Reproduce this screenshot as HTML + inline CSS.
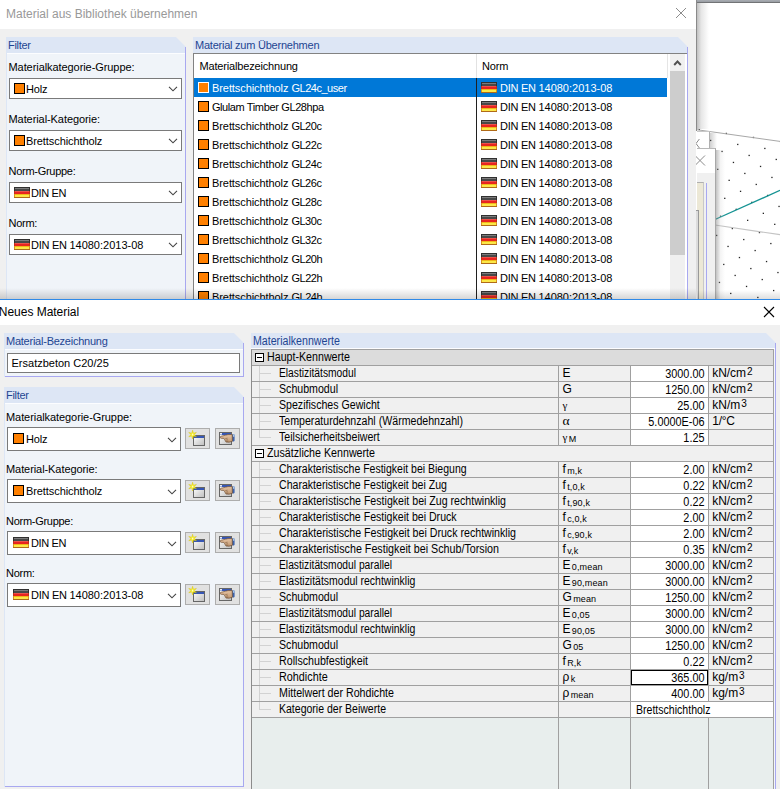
<!DOCTYPE html>
<html lang="de"><head><meta charset="utf-8"><title>Neues Material</title><style>
*{box-sizing:border-box;margin:0;padding:0}
html,body{width:780px;height:789px;overflow:hidden;background:#fff}
body{position:relative;font-family:"Liberation Sans",sans-serif;font-size:11px;color:#000}
.a{position:absolute}
.t{position:absolute;white-space:nowrap;line-height:13px;height:13px}
.tt{position:absolute;white-space:nowrap;font-size:12px;line-height:15px}
.gh{position:absolute;background:#dde6f5}
.gb{position:absolute;background:#f0f4f9}
.hd{color:#1e4592}
.cb{position:absolute;background:#fff;border:1px solid #7a7a7a}
.sw{position:absolute;width:11px;height:11px;background:#ff8000;border:1px solid #000}
.btn{position:absolute;width:25px;height:21px;background:#e1e1e1;border:1px solid #adadad}
.g{font-size:12px;line-height:16px;height:16px}
.v{width:73.5px;text-align:right}
.sym{font-size:12px;line-height:16px;height:16px}
.gr{font-family:"Liberation Serif",serif;font-size:11px}
.gr2{font-family:"Liberation Serif",serif;font-size:13.5px}
.u{font-size:12px;line-height:16px;height:16px}
.sub{font-size:9px;position:relative;top:1px;margin-left:1.3px;letter-spacing:.15px}
.sup{font-size:10px;position:relative;top:-2.5px;margin-left:1px}
</style></head><body>
<div class="a" style="left:696px;top:0px;width:84px;height:300px;background:#fff"></div>
<svg class="a" style="left:696px;top:0" width="84" height="300" viewBox="696 0 84 300"><defs><linearGradient id="sh" x1="0" x2="1" y1="0" y2="0"><stop offset="0" stop-color="#b4b4b4"/><stop offset="0.35" stop-color="#e4e4e4"/><stop offset="1" stop-color="#ffffff"/></linearGradient></defs><rect x="697.1" y="193.6" width="1.3" height="1.3" fill="#222"/><rect x="708.5" y="204.6" width="1.3" height="1.3" fill="#222"/><rect x="719.9" y="215.6" width="1.3" height="1.3" fill="#222"/><rect x="701.4" y="175.7" width="1.3" height="1.3" fill="#222"/><rect x="712.8" y="186.7" width="1.3" height="1.3" fill="#222"/><rect x="724.1" y="197.7" width="1.3" height="1.3" fill="#222"/><rect x="735.6" y="208.7" width="1.3" height="1.3" fill="#222"/><rect x="747.0" y="219.7" width="1.3" height="1.3" fill="#222"/><rect x="705.7" y="157.7" width="1.3" height="1.3" fill="#222"/><rect x="717.1" y="168.7" width="1.3" height="1.3" fill="#222"/><rect x="728.5" y="179.7" width="1.3" height="1.3" fill="#222"/><rect x="739.9" y="190.7" width="1.3" height="1.3" fill="#222"/><rect x="751.2" y="201.7" width="1.3" height="1.3" fill="#222"/><rect x="762.7" y="212.7" width="1.3" height="1.3" fill="#222"/><rect x="774.1" y="223.7" width="1.3" height="1.3" fill="#222"/><rect x="698.6" y="128.8" width="1.3" height="1.3" fill="#222"/><rect x="710.0" y="139.8" width="1.3" height="1.3" fill="#222"/><rect x="721.4" y="150.8" width="1.3" height="1.3" fill="#222"/><rect x="732.8" y="161.8" width="1.3" height="1.3" fill="#222"/><rect x="744.2" y="172.8" width="1.3" height="1.3" fill="#222"/><rect x="755.6" y="183.8" width="1.3" height="1.3" fill="#222"/><rect x="767.0" y="194.8" width="1.3" height="1.3" fill="#222"/><rect x="778.4" y="205.8" width="1.3" height="1.3" fill="#222"/><rect x="725.7" y="132.8" width="1.3" height="1.3" fill="#222"/><rect x="737.1" y="143.8" width="1.3" height="1.3" fill="#222"/><rect x="748.5" y="154.8" width="1.3" height="1.3" fill="#222"/><rect x="759.9" y="165.8" width="1.3" height="1.3" fill="#222"/><rect x="771.3" y="176.8" width="1.3" height="1.3" fill="#222"/><rect x="752.8" y="136.8" width="1.3" height="1.3" fill="#222"/><rect x="764.2" y="147.8" width="1.3" height="1.3" fill="#222"/><rect x="775.6" y="158.8" width="1.3" height="1.3" fill="#222"/><rect x="779.9" y="140.9" width="1.3" height="1.3" fill="#222"/><rect x="718.8" y="281.8" width="1.3" height="1.3" fill="#222"/><rect x="730.1" y="292.8" width="1.3" height="1.3" fill="#222"/><rect x="723.1" y="263.8" width="1.3" height="1.3" fill="#222"/><rect x="734.5" y="274.8" width="1.3" height="1.3" fill="#222"/><rect x="745.9" y="285.8" width="1.3" height="1.3" fill="#222"/><rect x="757.2" y="296.8" width="1.3" height="1.3" fill="#222"/><rect x="716.0" y="234.8" width="1.3" height="1.3" fill="#222"/><rect x="727.4" y="245.8" width="1.3" height="1.3" fill="#222"/><rect x="738.8" y="256.9" width="1.3" height="1.3" fill="#222"/><rect x="750.2" y="267.9" width="1.3" height="1.3" fill="#222"/><rect x="761.6" y="278.9" width="1.3" height="1.3" fill="#222"/><rect x="773.0" y="289.9" width="1.3" height="1.3" fill="#222"/><rect x="731.7" y="227.9" width="1.3" height="1.3" fill="#222"/><rect x="743.1" y="238.9" width="1.3" height="1.3" fill="#222"/><rect x="754.5" y="249.9" width="1.3" height="1.3" fill="#222"/><rect x="765.9" y="260.9" width="1.3" height="1.3" fill="#222"/><rect x="777.3" y="271.9" width="1.3" height="1.3" fill="#222"/><rect x="758.8" y="231.9" width="1.3" height="1.3" fill="#222"/><rect x="770.2" y="242.9" width="1.3" height="1.3" fill="#222"/><line x1="696" y1="129.6" x2="780" y2="141.4" stroke="#a8a8a8" stroke-width="1"/><line x1="715" y1="225" x2="780" y2="234.7" stroke="#c4c4c4" stroke-width="1.2"/><line x1="715" y1="219.5" x2="780" y2="190.3" stroke="#159393" stroke-width="1.35"/></svg>
<div class="a" style="left:697px;top:131px;width:13px;height:18px;background:#fff;border-right:1px solid #b0b0b0;border-top:1px solid #c8c8c8"></div>
<div class="a" style="left:697px;top:148px;width:19px;height:152px;background:#f0f0f0;border-right:1px solid #a8a8a8;border-top:1px solid #b8b8b8"></div>
<div class="a" style="left:697px;top:149px;width:18px;height:24px;background:#fff"></div>
<svg class="a" style="left:696px;top:155px" width="10" height="12" viewBox="0 0 10 12"><path d="M-1 0.5 L9 10.5 M9 0.5 L-1 10.5" stroke="#8a8a8a" stroke-width="1" fill="none"/></svg>
<svg class="a" style="left:696px;top:137px" width="10" height="12" viewBox="0 0 10 12"><path d="M0 6.5 L3.4 2 M0 6.5 L3.4 11" stroke="#8a8a8a" stroke-width="1" fill="none"/></svg>
<div class="a" style="left:697px;top:182px;width:7px;height:118px;background:#ece8d6;border-top:1px solid #b0b0b0;border-right:1px solid #c8c8c8"></div>
<div class="a" style="left:696px;top:210px;width:3px;height:90px;background:#dcdcdc;border-top:1px solid #999;border-right:1px solid #999"></div>
<div class="a" style="left:706px;top:183px;width:1px;height:117px;background:#a8a8f0"></div>
<div class="a" style="left:697px;top:3px;width:12px;height:126px;background:linear-gradient(to right,#c0c0c0 0,#e6e6e6 35%,#fff 100%)"></div>
<div class="a" style="left:716px;top:150px;width:9px;height:150px;background:linear-gradient(to right,rgba(120,120,120,.45) 0,rgba(200,200,200,.2) 50%,rgba(255,255,255,0) 100%)"></div>
<div class="a" style="left:710px;top:133px;width:7px;height:15px;background:linear-gradient(to right,rgba(120,120,120,.35) 0,rgba(255,255,255,0) 100%)"></div>
<div class="a" style="left:697px;top:290px;width:83px;height:9px;background:linear-gradient(to bottom,rgba(0,0,0,0) 0,rgba(0,0,0,.13) 100%)"></div>
<div class="a" style="left:696px;top:0px;width:84px;height:3px;background:linear-gradient(to bottom,#a9adb3 0,#9a9ea4 60%,#555 100%)"></div>
<div class="a" style="left:696px;top:0px;width:1px;height:131px;background:#8a8a8a"></div>
<div class="a" style="left:0px;top:0px;width:696px;height:300px;background:#f0f0f0"></div>
<div class="a" style="left:0px;top:0px;width:696px;height:29px;background:#fff"></div>
<div class="tt" style="left:6px;top:7px;color:#999;">Material aus Bibliothek übernehmen</div>
<svg class="a" style="left:675px;top:7px" width="12" height="12" viewBox="0 0 12 12"><path d="M1 1 L11 11 M11 1 L1 11" stroke="#8c8c8c" stroke-width="1" fill="none"/></svg>
<div class="gh" style="left:6px;top:37px;width:180px;height:16px;clip-path:polygon(0 0,170px 0,180px 10px,180px 16px,0 16px)"></div>
<div class="gb" style="left:7px;top:53px;width:178px;height:254px;"></div>
<div class="a" style="left:6px;top:53px;width:1px;height:254px;background:#dde6f5"></div>
<div class="a" style="left:7px;top:53px;width:178px;height:1px;background:#fcfdff"></div>
<div class="a" style="left:185px;top:47px;width:1px;height:260px;background:#a8a8f0"></div>
<div class="t hd" style="left:8px;top:39px;letter-spacing:-0.309px;">Filter</div>
<div class="t" style="left:8.5px;top:61px;letter-spacing:-0.072px;">Materialkategorie-Gruppe:</div>
<div class="cb" style="left:9px;top:78px;width:173px;height:21px;"></div>
<div class="sw" style="left:14px;top:83px;width:11px;height:11px;"></div>
<div class="t" style="left:26px;top:83px;letter-spacing:-0.204px;">Holz</div>
<svg class="a" style="left:168px;top:86px" width="10" height="6" viewBox="0 0 10 6"><path d="M1 0.8 L5 4.8 L9 0.8" fill="none" stroke="#444" stroke-width="1.1"/></svg>
<div class="t" style="left:8.5px;top:113px;letter-spacing:-0.076px;">Material-Kategorie:</div>
<div class="cb" style="left:9px;top:130px;width:173px;height:21px;"></div>
<div class="sw" style="left:14px;top:135px;width:11px;height:11px;"></div>
<div class="t" style="left:26px;top:135px;letter-spacing:-0.085px;">Brettschichtholz</div>
<svg class="a" style="left:168px;top:138px" width="10" height="6" viewBox="0 0 10 6"><path d="M1 0.8 L5 4.8 L9 0.8" fill="none" stroke="#444" stroke-width="1.1"/></svg>
<div class="t" style="left:8.5px;top:165px;letter-spacing:-0.275px;">Norm-Gruppe:</div>
<div class="cb" style="left:9px;top:182px;width:173px;height:21px;"></div>
<svg class="a" style="left:14px;top:187px" width="16" height="11" viewBox="0 0 16 11"><rect x="0" y="0" width="16" height="11" fill="#303030"/><rect x="0" y="4" width="16" height="3" fill="#c03018"/><rect x="0" y="7" width="16" height="3" fill="#d89020"/><rect x="0" y="10" width="16" height="1" fill="#b06a18"/><rect x="1" y="1" width="14" height="1" fill="#7c7c7c"/><rect x="1" y="2" width="14" height="2" fill="#484848"/><rect x="1" y="4" width="14" height="1" fill="#f05048"/><rect x="1" y="5" width="14" height="2" fill="#e82420"/><rect x="1" y="7" width="14" height="1" fill="#f0b818"/><rect x="1" y="8" width="14" height="2" fill="#fce848"/></svg>
<div class="t" style="left:31px;top:187px;letter-spacing:-0.347px;">DIN EN</div>
<svg class="a" style="left:168px;top:190px" width="10" height="6" viewBox="0 0 10 6"><path d="M1 0.8 L5 4.8 L9 0.8" fill="none" stroke="#444" stroke-width="1.1"/></svg>
<div class="t" style="left:8.5px;top:217px;letter-spacing:-0.271px;">Norm:</div>
<div class="cb" style="left:9px;top:234px;width:173px;height:21px;"></div>
<svg class="a" style="left:14px;top:239px" width="16" height="11" viewBox="0 0 16 11"><rect x="0" y="0" width="16" height="11" fill="#303030"/><rect x="0" y="4" width="16" height="3" fill="#c03018"/><rect x="0" y="7" width="16" height="3" fill="#d89020"/><rect x="0" y="10" width="16" height="1" fill="#b06a18"/><rect x="1" y="1" width="14" height="1" fill="#7c7c7c"/><rect x="1" y="2" width="14" height="2" fill="#484848"/><rect x="1" y="4" width="14" height="1" fill="#f05048"/><rect x="1" y="5" width="14" height="2" fill="#e82420"/><rect x="1" y="7" width="14" height="1" fill="#f0b818"/><rect x="1" y="8" width="14" height="2" fill="#fce848"/></svg>
<div class="t" style="left:31px;top:239px;"><span style="letter-spacing:-0.278px">DIN EN </span><span style="letter-spacing:-0.001px">14080:2013-08</span></div>
<svg class="a" style="left:168px;top:242px" width="10" height="6" viewBox="0 0 10 6"><path d="M1 0.8 L5 4.8 L9 0.8" fill="none" stroke="#444" stroke-width="1.1"/></svg>
<div class="gh" style="left:193px;top:37px;width:495px;height:16px;clip-path:polygon(0 0,485px 0,495px 10px,495px 16px,0 16px)"></div>
<div class="gb" style="left:194px;top:53px;width:493px;height:254px;"></div>
<div class="a" style="left:193px;top:53px;width:1px;height:254px;background:#dde6f5"></div>
<div class="a" style="left:194px;top:53px;width:493px;height:1px;background:#fcfdff"></div>
<div class="a" style="left:687px;top:47px;width:1px;height:260px;background:#a8a8f0"></div>
<div class="t hd" style="left:195px;top:39px;letter-spacing:-0.232px;">Material zum Übernehmen</div>
<div class="a" style="left:193px;top:53px;width:494px;height:250px;background:#fff;border-left:1px solid #828282;border-top:1px solid #828282"></div>
<div class="a" style="left:670px;top:54px;width:15px;height:246px;background:#f0f0f0"></div>
<div class="a" style="left:670px;top:71px;width:15px;height:184px;background:#cdcdcd"></div>
<svg class="a" style="left:673px;top:58px" width="10" height="9" viewBox="0 0 10 9"><path d="M1.2 7 L4.5 3.5 L7.8 7" fill="none" stroke="#505050" stroke-width="1.9"/></svg>
<div class="a" style="left:667px;top:54px;width:1px;height:24px;background:#e5e5e5"></div>
<div class="a" style="left:476px;top:54px;width:1px;height:24px;background:#e2e2e2"></div>
<div class="a" style="left:476px;top:78px;width:1px;height:222px;background:#202020"></div>
<div class="t" style="left:199.5px;top:60px;letter-spacing:-0.169px;">Materialbezeichnung</div>
<div class="t" style="left:482px;top:60px;letter-spacing:-0.148px;">Norm</div>
<div class="a" style="left:194px;top:78px;width:282px;height:19px;background:#0078d7"></div>
<div class="a" style="left:477px;top:78px;width:190px;height:19px;background:#0078d7"></div>
<div class="a" style="left:194px;top:78px;width:476px;height:221px;overflow:hidden">
<div class="sw" style="left:4px;top:4px;border-color:#fff;"></div>
<div class="t" style="left:18px;top:4px;color:#fff;"><span style="letter-spacing:-0.077px">Brettschichtholz </span><span style="letter-spacing:-0.474px">GL24c_user</span></div>
<svg class="a" style="left:287px;top:4px" width="16" height="11" viewBox="0 0 16 11"><rect x="0" y="0" width="16" height="11" fill="#303030"/><rect x="0" y="4" width="16" height="3" fill="#c03018"/><rect x="0" y="7" width="16" height="3" fill="#d89020"/><rect x="0" y="10" width="16" height="1" fill="#b06a18"/><rect x="1" y="1" width="14" height="1" fill="#7c7c7c"/><rect x="1" y="2" width="14" height="2" fill="#484848"/><rect x="1" y="4" width="14" height="1" fill="#f05048"/><rect x="1" y="5" width="14" height="2" fill="#e82420"/><rect x="1" y="7" width="14" height="1" fill="#f0b818"/><rect x="1" y="8" width="14" height="2" fill="#fce848"/></svg>
<div class="t" style="left:306px;top:4px;color:#fff;"><span style="letter-spacing:-0.278px">DIN EN </span><span style="letter-spacing:-0.001px">14080:2013-08</span></div>
<div class="sw" style="left:4px;top:23px;"></div>
<div class="t" style="left:18px;top:23px;"><span style="letter-spacing:-0.458px">Glulam </span><span style="letter-spacing:-0.325px">Timber </span><span style="letter-spacing:-0.424px">GL28hpa</span></div>
<svg class="a" style="left:287px;top:23px" width="16" height="11" viewBox="0 0 16 11"><rect x="0" y="0" width="16" height="11" fill="#303030"/><rect x="0" y="4" width="16" height="3" fill="#c03018"/><rect x="0" y="7" width="16" height="3" fill="#d89020"/><rect x="0" y="10" width="16" height="1" fill="#b06a18"/><rect x="1" y="1" width="14" height="1" fill="#7c7c7c"/><rect x="1" y="2" width="14" height="2" fill="#484848"/><rect x="1" y="4" width="14" height="1" fill="#f05048"/><rect x="1" y="5" width="14" height="2" fill="#e82420"/><rect x="1" y="7" width="14" height="1" fill="#f0b818"/><rect x="1" y="8" width="14" height="2" fill="#fce848"/></svg>
<div class="t" style="left:306px;top:23px;"><span style="letter-spacing:-0.278px">DIN EN </span><span style="letter-spacing:-0.001px">14080:2013-08</span></div>
<div class="sw" style="left:4px;top:42px;"></div>
<div class="t" style="left:18px;top:42px;"><span style="letter-spacing:-0.077px">Brettschichtholz </span><span style="letter-spacing:-0.484px">GL20c</span></div>
<svg class="a" style="left:287px;top:42px" width="16" height="11" viewBox="0 0 16 11"><rect x="0" y="0" width="16" height="11" fill="#303030"/><rect x="0" y="4" width="16" height="3" fill="#c03018"/><rect x="0" y="7" width="16" height="3" fill="#d89020"/><rect x="0" y="10" width="16" height="1" fill="#b06a18"/><rect x="1" y="1" width="14" height="1" fill="#7c7c7c"/><rect x="1" y="2" width="14" height="2" fill="#484848"/><rect x="1" y="4" width="14" height="1" fill="#f05048"/><rect x="1" y="5" width="14" height="2" fill="#e82420"/><rect x="1" y="7" width="14" height="1" fill="#f0b818"/><rect x="1" y="8" width="14" height="2" fill="#fce848"/></svg>
<div class="t" style="left:306px;top:42px;"><span style="letter-spacing:-0.278px">DIN EN </span><span style="letter-spacing:-0.001px">14080:2013-08</span></div>
<div class="sw" style="left:4px;top:61px;"></div>
<div class="t" style="left:18px;top:61px;"><span style="letter-spacing:-0.077px">Brettschichtholz </span><span style="letter-spacing:-0.484px">GL22c</span></div>
<svg class="a" style="left:287px;top:61px" width="16" height="11" viewBox="0 0 16 11"><rect x="0" y="0" width="16" height="11" fill="#303030"/><rect x="0" y="4" width="16" height="3" fill="#c03018"/><rect x="0" y="7" width="16" height="3" fill="#d89020"/><rect x="0" y="10" width="16" height="1" fill="#b06a18"/><rect x="1" y="1" width="14" height="1" fill="#7c7c7c"/><rect x="1" y="2" width="14" height="2" fill="#484848"/><rect x="1" y="4" width="14" height="1" fill="#f05048"/><rect x="1" y="5" width="14" height="2" fill="#e82420"/><rect x="1" y="7" width="14" height="1" fill="#f0b818"/><rect x="1" y="8" width="14" height="2" fill="#fce848"/></svg>
<div class="t" style="left:306px;top:61px;"><span style="letter-spacing:-0.278px">DIN EN </span><span style="letter-spacing:-0.001px">14080:2013-08</span></div>
<div class="sw" style="left:4px;top:80px;"></div>
<div class="t" style="left:18px;top:80px;"><span style="letter-spacing:-0.077px">Brettschichtholz </span><span style="letter-spacing:-0.484px">GL24c</span></div>
<svg class="a" style="left:287px;top:80px" width="16" height="11" viewBox="0 0 16 11"><rect x="0" y="0" width="16" height="11" fill="#303030"/><rect x="0" y="4" width="16" height="3" fill="#c03018"/><rect x="0" y="7" width="16" height="3" fill="#d89020"/><rect x="0" y="10" width="16" height="1" fill="#b06a18"/><rect x="1" y="1" width="14" height="1" fill="#7c7c7c"/><rect x="1" y="2" width="14" height="2" fill="#484848"/><rect x="1" y="4" width="14" height="1" fill="#f05048"/><rect x="1" y="5" width="14" height="2" fill="#e82420"/><rect x="1" y="7" width="14" height="1" fill="#f0b818"/><rect x="1" y="8" width="14" height="2" fill="#fce848"/></svg>
<div class="t" style="left:306px;top:80px;"><span style="letter-spacing:-0.278px">DIN EN </span><span style="letter-spacing:-0.001px">14080:2013-08</span></div>
<div class="sw" style="left:4px;top:99px;"></div>
<div class="t" style="left:18px;top:99px;"><span style="letter-spacing:-0.077px">Brettschichtholz </span><span style="letter-spacing:-0.484px">GL26c</span></div>
<svg class="a" style="left:287px;top:99px" width="16" height="11" viewBox="0 0 16 11"><rect x="0" y="0" width="16" height="11" fill="#303030"/><rect x="0" y="4" width="16" height="3" fill="#c03018"/><rect x="0" y="7" width="16" height="3" fill="#d89020"/><rect x="0" y="10" width="16" height="1" fill="#b06a18"/><rect x="1" y="1" width="14" height="1" fill="#7c7c7c"/><rect x="1" y="2" width="14" height="2" fill="#484848"/><rect x="1" y="4" width="14" height="1" fill="#f05048"/><rect x="1" y="5" width="14" height="2" fill="#e82420"/><rect x="1" y="7" width="14" height="1" fill="#f0b818"/><rect x="1" y="8" width="14" height="2" fill="#fce848"/></svg>
<div class="t" style="left:306px;top:99px;"><span style="letter-spacing:-0.278px">DIN EN </span><span style="letter-spacing:-0.001px">14080:2013-08</span></div>
<div class="sw" style="left:4px;top:118px;"></div>
<div class="t" style="left:18px;top:118px;"><span style="letter-spacing:-0.077px">Brettschichtholz </span><span style="letter-spacing:-0.484px">GL28c</span></div>
<svg class="a" style="left:287px;top:118px" width="16" height="11" viewBox="0 0 16 11"><rect x="0" y="0" width="16" height="11" fill="#303030"/><rect x="0" y="4" width="16" height="3" fill="#c03018"/><rect x="0" y="7" width="16" height="3" fill="#d89020"/><rect x="0" y="10" width="16" height="1" fill="#b06a18"/><rect x="1" y="1" width="14" height="1" fill="#7c7c7c"/><rect x="1" y="2" width="14" height="2" fill="#484848"/><rect x="1" y="4" width="14" height="1" fill="#f05048"/><rect x="1" y="5" width="14" height="2" fill="#e82420"/><rect x="1" y="7" width="14" height="1" fill="#f0b818"/><rect x="1" y="8" width="14" height="2" fill="#fce848"/></svg>
<div class="t" style="left:306px;top:118px;"><span style="letter-spacing:-0.278px">DIN EN </span><span style="letter-spacing:-0.001px">14080:2013-08</span></div>
<div class="sw" style="left:4px;top:137px;"></div>
<div class="t" style="left:18px;top:137px;"><span style="letter-spacing:-0.077px">Brettschichtholz </span><span style="letter-spacing:-0.484px">GL30c</span></div>
<svg class="a" style="left:287px;top:137px" width="16" height="11" viewBox="0 0 16 11"><rect x="0" y="0" width="16" height="11" fill="#303030"/><rect x="0" y="4" width="16" height="3" fill="#c03018"/><rect x="0" y="7" width="16" height="3" fill="#d89020"/><rect x="0" y="10" width="16" height="1" fill="#b06a18"/><rect x="1" y="1" width="14" height="1" fill="#7c7c7c"/><rect x="1" y="2" width="14" height="2" fill="#484848"/><rect x="1" y="4" width="14" height="1" fill="#f05048"/><rect x="1" y="5" width="14" height="2" fill="#e82420"/><rect x="1" y="7" width="14" height="1" fill="#f0b818"/><rect x="1" y="8" width="14" height="2" fill="#fce848"/></svg>
<div class="t" style="left:306px;top:137px;"><span style="letter-spacing:-0.278px">DIN EN </span><span style="letter-spacing:-0.001px">14080:2013-08</span></div>
<div class="sw" style="left:4px;top:156px;"></div>
<div class="t" style="left:18px;top:156px;"><span style="letter-spacing:-0.077px">Brettschichtholz </span><span style="letter-spacing:-0.484px">GL32c</span></div>
<svg class="a" style="left:287px;top:156px" width="16" height="11" viewBox="0 0 16 11"><rect x="0" y="0" width="16" height="11" fill="#303030"/><rect x="0" y="4" width="16" height="3" fill="#c03018"/><rect x="0" y="7" width="16" height="3" fill="#d89020"/><rect x="0" y="10" width="16" height="1" fill="#b06a18"/><rect x="1" y="1" width="14" height="1" fill="#7c7c7c"/><rect x="1" y="2" width="14" height="2" fill="#484848"/><rect x="1" y="4" width="14" height="1" fill="#f05048"/><rect x="1" y="5" width="14" height="2" fill="#e82420"/><rect x="1" y="7" width="14" height="1" fill="#f0b818"/><rect x="1" y="8" width="14" height="2" fill="#fce848"/></svg>
<div class="t" style="left:306px;top:156px;"><span style="letter-spacing:-0.278px">DIN EN </span><span style="letter-spacing:-0.001px">14080:2013-08</span></div>
<div class="sw" style="left:4px;top:175px;"></div>
<div class="t" style="left:18px;top:175px;"><span style="letter-spacing:-0.077px">Brettschichtholz </span><span style="letter-spacing:-0.446px">GL20h</span></div>
<svg class="a" style="left:287px;top:175px" width="16" height="11" viewBox="0 0 16 11"><rect x="0" y="0" width="16" height="11" fill="#303030"/><rect x="0" y="4" width="16" height="3" fill="#c03018"/><rect x="0" y="7" width="16" height="3" fill="#d89020"/><rect x="0" y="10" width="16" height="1" fill="#b06a18"/><rect x="1" y="1" width="14" height="1" fill="#7c7c7c"/><rect x="1" y="2" width="14" height="2" fill="#484848"/><rect x="1" y="4" width="14" height="1" fill="#f05048"/><rect x="1" y="5" width="14" height="2" fill="#e82420"/><rect x="1" y="7" width="14" height="1" fill="#f0b818"/><rect x="1" y="8" width="14" height="2" fill="#fce848"/></svg>
<div class="t" style="left:306px;top:175px;"><span style="letter-spacing:-0.278px">DIN EN </span><span style="letter-spacing:-0.001px">14080:2013-08</span></div>
<div class="sw" style="left:4px;top:194px;"></div>
<div class="t" style="left:18px;top:194px;"><span style="letter-spacing:-0.077px">Brettschichtholz </span><span style="letter-spacing:-0.446px">GL22h</span></div>
<svg class="a" style="left:287px;top:194px" width="16" height="11" viewBox="0 0 16 11"><rect x="0" y="0" width="16" height="11" fill="#303030"/><rect x="0" y="4" width="16" height="3" fill="#c03018"/><rect x="0" y="7" width="16" height="3" fill="#d89020"/><rect x="0" y="10" width="16" height="1" fill="#b06a18"/><rect x="1" y="1" width="14" height="1" fill="#7c7c7c"/><rect x="1" y="2" width="14" height="2" fill="#484848"/><rect x="1" y="4" width="14" height="1" fill="#f05048"/><rect x="1" y="5" width="14" height="2" fill="#e82420"/><rect x="1" y="7" width="14" height="1" fill="#f0b818"/><rect x="1" y="8" width="14" height="2" fill="#fce848"/></svg>
<div class="t" style="left:306px;top:194px;"><span style="letter-spacing:-0.278px">DIN EN </span><span style="letter-spacing:-0.001px">14080:2013-08</span></div>
<div class="sw" style="left:4px;top:213px;"></div>
<div class="t" style="left:18px;top:213px;"><span style="letter-spacing:-0.077px">Brettschichtholz </span><span style="letter-spacing:-0.446px">GL24h</span></div>
<svg class="a" style="left:287px;top:213px" width="16" height="11" viewBox="0 0 16 11"><rect x="0" y="0" width="16" height="11" fill="#303030"/><rect x="0" y="4" width="16" height="3" fill="#c03018"/><rect x="0" y="7" width="16" height="3" fill="#d89020"/><rect x="0" y="10" width="16" height="1" fill="#b06a18"/><rect x="1" y="1" width="14" height="1" fill="#7c7c7c"/><rect x="1" y="2" width="14" height="2" fill="#484848"/><rect x="1" y="4" width="14" height="1" fill="#f05048"/><rect x="1" y="5" width="14" height="2" fill="#e82420"/><rect x="1" y="7" width="14" height="1" fill="#f0b818"/><rect x="1" y="8" width="14" height="2" fill="#fce848"/></svg>
<div class="t" style="left:306px;top:213px;"><span style="letter-spacing:-0.278px">DIN EN </span><span style="letter-spacing:-0.001px">14080:2013-08</span></div>
</div>
<div class="a" style="left:0px;top:288px;width:696px;height:11px;background:linear-gradient(to bottom,rgba(0,0,0,0) 0,rgba(0,0,0,.16) 100%)"></div>
<div class="a" style="left:0px;top:299px;width:780px;height:490px;background:#f0f0f0"></div>
<div class="a" style="left:0px;top:299px;width:780px;height:1px;background:#2f8ae8"></div>
<div class="a" style="left:0px;top:300px;width:780px;height:25px;background:#fff"></div>
<div class="tt" style="left:-1.2px;top:305px;color:#000;letter-spacing:-0.029px;">Neues Material</div>
<svg class="a" style="left:763px;top:306px" width="12" height="12" viewBox="0 0 12 12"><path d="M1 1 L11 11 M11 1 L1 11" stroke="#000" stroke-width="1.1" fill="none"/></svg>
<div class="gh" style="left:4px;top:333px;width:240px;height:16px;clip-path:polygon(0 0,230px 0,240px 10px,240px 16px,0 16px)"></div>
<div class="gb" style="left:5px;top:349px;width:238px;height:28px;"></div>
<div class="a" style="left:4px;top:349px;width:1px;height:28px;background:#dde6f5"></div>
<div class="a" style="left:5px;top:349px;width:238px;height:1px;background:#fcfdff"></div>
<div class="a" style="left:243px;top:343px;width:1px;height:34px;background:#a8a8f0"></div>
<div class="a" style="left:5px;top:376px;width:239px;height:1px;background:#a8a8f0"></div>
<div class="t hd" style="left:6px;top:335px;letter-spacing:-0.240px;">Material-Bezeichnung</div>
<div class="a" style="left:7px;top:353px;width:233px;height:20px;background:#fff;border:1px solid #7a7a7a"></div>
<div class="t" style="left:11.5px;top:357px;letter-spacing:0.004px;">Ersatzbeton C20/25</div>
<div class="gh" style="left:4px;top:387px;width:240px;height:16px;clip-path:polygon(0 0,230px 0,240px 10px,240px 16px,0 16px)"></div>
<div class="gb" style="left:5px;top:403px;width:238px;height:384px;"></div>
<div class="a" style="left:4px;top:403px;width:1px;height:384px;background:#dde6f5"></div>
<div class="a" style="left:5px;top:403px;width:238px;height:1px;background:#fcfdff"></div>
<div class="a" style="left:243px;top:397px;width:1px;height:390px;background:#a8a8f0"></div>
<div class="a" style="left:5px;top:786px;width:239px;height:1px;background:#a8a8f0"></div>
<div class="t hd" style="left:6px;top:389px;letter-spacing:-0.309px;">Filter</div>
<svg width="0" height="0" style="position:absolute"><defs><linearGradient id="wg" x1="0" y1="0" x2="1" y2="1"><stop offset="0" stop-color="#ffffff"/><stop offset="1" stop-color="#bdbdbd"/></linearGradient><radialGradient id="sg" cx="0.5" cy="0.5" r="0.5"><stop offset="0" stop-color="#ffffd0"/><stop offset="0.3" stop-color="#f8f040"/><stop offset="1" stop-color="#e6d400"/></radialGradient><linearGradient id="hg" x1="0" y1="0" x2="0" y2="1"><stop offset="0" stop-color="#e6c4a4"/><stop offset="1" stop-color="#c09670"/></linearGradient></defs></svg>
<div class="t" style="left:6px;top:411px;letter-spacing:-0.072px;">Materialkategorie-Gruppe:</div>
<div class="cb" style="left:7px;top:427px;width:174px;height:24px;"></div>
<div class="sw" style="left:13px;top:433px;width:11px;height:11px;"></div>
<div class="t" style="left:26px;top:433px;letter-spacing:-0.204px;">Holz</div>
<svg class="a" style="left:167px;top:437px" width="10" height="6" viewBox="0 0 10 6"><path d="M1 0.8 L5 4.8 L9 0.8" fill="none" stroke="#444" stroke-width="1.1"/></svg>
<div class="btn" style="left:185px;top:428px;width:25px;height:21px;"></div>
<svg class="a" style="left:185px;top:428px" width="25" height="21" viewBox="0 0 25 21"><rect x="8.5" y="7.5" width="11" height="10" fill="url(#wg)" stroke="#666" stroke-width="1"/><rect x="9" y="8" width="10" height="2" fill="#3656b4"/><polygon points="7.60,2.20 8.45,5.13 11.41,4.40 9.30,6.60 11.41,8.80 8.45,8.07 7.60,11.00 6.75,8.07 3.79,8.80 5.90,6.60 3.79,4.40 6.75,5.13" fill="url(#sg)" stroke="#d8c800" stroke-width=".4"/></svg>
<div class="btn" style="left:215px;top:428px;width:25px;height:21px;"></div>
<svg class="a" style="left:215px;top:428px" width="25" height="21" viewBox="0 0 25 21"><rect x="4.5" y="4.5" width="12" height="12" fill="url(#wg)" stroke="#666" stroke-width="1"/><rect x="5" y="5" width="11" height="2" fill="#3656b4"/><rect x="5" y="5" width="2" height="1.6" fill="#e8eef8"/><rect x="17" y="6.2" width="2.6" height="7.2" rx=".8" fill="#3d62aa"/><rect x="18" y="6.4" width="1.4" height="2.4" fill="#a8c8ec"/><path d="M5.2 9.2 C5.2 8.4 6 8.1 7 8.1 L10.5 7.2 L13 6.6 L17.2 6.6 L17.4 13.2 L14 14.2 L11 14 L10.2 12.6 L9.4 11.2 L8.8 10.4 L6.2 10.3 C5.5 10.3 5.2 9.8 5.2 9.2 Z" fill="url(#hg)" stroke="#6e4e34" stroke-width=".7"/><path d="M10.3 10.6 L12.6 10.2 M10.8 12.2 L13 11.8 M11.4 13.6 L13.4 13.2" stroke="#7e5c40" stroke-width=".6" fill="none"/></svg>
<div class="t" style="left:6px;top:463px;letter-spacing:-0.076px;">Material-Kategorie:</div>
<div class="cb" style="left:7px;top:479px;width:174px;height:24px;"></div>
<div class="sw" style="left:13px;top:485px;width:11px;height:11px;"></div>
<div class="t" style="left:26px;top:485px;letter-spacing:-0.085px;">Brettschichtholz</div>
<svg class="a" style="left:167px;top:489px" width="10" height="6" viewBox="0 0 10 6"><path d="M1 0.8 L5 4.8 L9 0.8" fill="none" stroke="#444" stroke-width="1.1"/></svg>
<div class="btn" style="left:185px;top:480px;width:25px;height:21px;"></div>
<svg class="a" style="left:185px;top:480px" width="25" height="21" viewBox="0 0 25 21"><rect x="8.5" y="7.5" width="11" height="10" fill="url(#wg)" stroke="#666" stroke-width="1"/><rect x="9" y="8" width="10" height="2" fill="#3656b4"/><polygon points="7.60,2.20 8.45,5.13 11.41,4.40 9.30,6.60 11.41,8.80 8.45,8.07 7.60,11.00 6.75,8.07 3.79,8.80 5.90,6.60 3.79,4.40 6.75,5.13" fill="url(#sg)" stroke="#d8c800" stroke-width=".4"/></svg>
<div class="btn" style="left:215px;top:480px;width:25px;height:21px;"></div>
<svg class="a" style="left:215px;top:480px" width="25" height="21" viewBox="0 0 25 21"><rect x="4.5" y="4.5" width="12" height="12" fill="url(#wg)" stroke="#666" stroke-width="1"/><rect x="5" y="5" width="11" height="2" fill="#3656b4"/><rect x="5" y="5" width="2" height="1.6" fill="#e8eef8"/><rect x="17" y="6.2" width="2.6" height="7.2" rx=".8" fill="#3d62aa"/><rect x="18" y="6.4" width="1.4" height="2.4" fill="#a8c8ec"/><path d="M5.2 9.2 C5.2 8.4 6 8.1 7 8.1 L10.5 7.2 L13 6.6 L17.2 6.6 L17.4 13.2 L14 14.2 L11 14 L10.2 12.6 L9.4 11.2 L8.8 10.4 L6.2 10.3 C5.5 10.3 5.2 9.8 5.2 9.2 Z" fill="url(#hg)" stroke="#6e4e34" stroke-width=".7"/><path d="M10.3 10.6 L12.6 10.2 M10.8 12.2 L13 11.8 M11.4 13.6 L13.4 13.2" stroke="#7e5c40" stroke-width=".6" fill="none"/></svg>
<div class="t" style="left:6px;top:515px;letter-spacing:-0.275px;">Norm-Gruppe:</div>
<div class="cb" style="left:7px;top:531px;width:174px;height:24px;"></div>
<svg class="a" style="left:13px;top:537px" width="16" height="11" viewBox="0 0 16 11"><rect x="0" y="0" width="16" height="11" fill="#303030"/><rect x="0" y="4" width="16" height="3" fill="#c03018"/><rect x="0" y="7" width="16" height="3" fill="#d89020"/><rect x="0" y="10" width="16" height="1" fill="#b06a18"/><rect x="1" y="1" width="14" height="1" fill="#7c7c7c"/><rect x="1" y="2" width="14" height="2" fill="#484848"/><rect x="1" y="4" width="14" height="1" fill="#f05048"/><rect x="1" y="5" width="14" height="2" fill="#e82420"/><rect x="1" y="7" width="14" height="1" fill="#f0b818"/><rect x="1" y="8" width="14" height="2" fill="#fce848"/></svg>
<div class="t" style="left:31px;top:537px;letter-spacing:-0.347px;">DIN EN</div>
<svg class="a" style="left:167px;top:541px" width="10" height="6" viewBox="0 0 10 6"><path d="M1 0.8 L5 4.8 L9 0.8" fill="none" stroke="#444" stroke-width="1.1"/></svg>
<div class="btn" style="left:185px;top:532px;width:25px;height:21px;"></div>
<svg class="a" style="left:185px;top:532px" width="25" height="21" viewBox="0 0 25 21"><rect x="8.5" y="7.5" width="11" height="10" fill="url(#wg)" stroke="#666" stroke-width="1"/><rect x="9" y="8" width="10" height="2" fill="#3656b4"/><polygon points="7.60,2.20 8.45,5.13 11.41,4.40 9.30,6.60 11.41,8.80 8.45,8.07 7.60,11.00 6.75,8.07 3.79,8.80 5.90,6.60 3.79,4.40 6.75,5.13" fill="url(#sg)" stroke="#d8c800" stroke-width=".4"/></svg>
<div class="btn" style="left:215px;top:532px;width:25px;height:21px;"></div>
<svg class="a" style="left:215px;top:532px" width="25" height="21" viewBox="0 0 25 21"><rect x="4.5" y="4.5" width="12" height="12" fill="url(#wg)" stroke="#666" stroke-width="1"/><rect x="5" y="5" width="11" height="2" fill="#3656b4"/><rect x="5" y="5" width="2" height="1.6" fill="#e8eef8"/><rect x="17" y="6.2" width="2.6" height="7.2" rx=".8" fill="#3d62aa"/><rect x="18" y="6.4" width="1.4" height="2.4" fill="#a8c8ec"/><path d="M5.2 9.2 C5.2 8.4 6 8.1 7 8.1 L10.5 7.2 L13 6.6 L17.2 6.6 L17.4 13.2 L14 14.2 L11 14 L10.2 12.6 L9.4 11.2 L8.8 10.4 L6.2 10.3 C5.5 10.3 5.2 9.8 5.2 9.2 Z" fill="url(#hg)" stroke="#6e4e34" stroke-width=".7"/><path d="M10.3 10.6 L12.6 10.2 M10.8 12.2 L13 11.8 M11.4 13.6 L13.4 13.2" stroke="#7e5c40" stroke-width=".6" fill="none"/></svg>
<div class="t" style="left:6px;top:567px;letter-spacing:-0.271px;">Norm:</div>
<div class="cb" style="left:7px;top:583px;width:174px;height:24px;"></div>
<svg class="a" style="left:13px;top:589px" width="16" height="11" viewBox="0 0 16 11"><rect x="0" y="0" width="16" height="11" fill="#303030"/><rect x="0" y="4" width="16" height="3" fill="#c03018"/><rect x="0" y="7" width="16" height="3" fill="#d89020"/><rect x="0" y="10" width="16" height="1" fill="#b06a18"/><rect x="1" y="1" width="14" height="1" fill="#7c7c7c"/><rect x="1" y="2" width="14" height="2" fill="#484848"/><rect x="1" y="4" width="14" height="1" fill="#f05048"/><rect x="1" y="5" width="14" height="2" fill="#e82420"/><rect x="1" y="7" width="14" height="1" fill="#f0b818"/><rect x="1" y="8" width="14" height="2" fill="#fce848"/></svg>
<div class="t" style="left:31px;top:589px;"><span style="letter-spacing:-0.278px">DIN EN </span><span style="letter-spacing:-0.001px">14080:2013-08</span></div>
<svg class="a" style="left:167px;top:593px" width="10" height="6" viewBox="0 0 10 6"><path d="M1 0.8 L5 4.8 L9 0.8" fill="none" stroke="#444" stroke-width="1.1"/></svg>
<div class="btn" style="left:185px;top:584px;width:25px;height:21px;"></div>
<svg class="a" style="left:185px;top:584px" width="25" height="21" viewBox="0 0 25 21"><rect x="8.5" y="7.5" width="11" height="10" fill="url(#wg)" stroke="#666" stroke-width="1"/><rect x="9" y="8" width="10" height="2" fill="#3656b4"/><polygon points="7.60,2.20 8.45,5.13 11.41,4.40 9.30,6.60 11.41,8.80 8.45,8.07 7.60,11.00 6.75,8.07 3.79,8.80 5.90,6.60 3.79,4.40 6.75,5.13" fill="url(#sg)" stroke="#d8c800" stroke-width=".4"/></svg>
<div class="btn" style="left:215px;top:584px;width:25px;height:21px;"></div>
<svg class="a" style="left:215px;top:584px" width="25" height="21" viewBox="0 0 25 21"><rect x="4.5" y="4.5" width="12" height="12" fill="url(#wg)" stroke="#666" stroke-width="1"/><rect x="5" y="5" width="11" height="2" fill="#3656b4"/><rect x="5" y="5" width="2" height="1.6" fill="#e8eef8"/><rect x="17" y="6.2" width="2.6" height="7.2" rx=".8" fill="#3d62aa"/><rect x="18" y="6.4" width="1.4" height="2.4" fill="#a8c8ec"/><path d="M5.2 9.2 C5.2 8.4 6 8.1 7 8.1 L10.5 7.2 L13 6.6 L17.2 6.6 L17.4 13.2 L14 14.2 L11 14 L10.2 12.6 L9.4 11.2 L8.8 10.4 L6.2 10.3 C5.5 10.3 5.2 9.8 5.2 9.2 Z" fill="url(#hg)" stroke="#6e4e34" stroke-width=".7"/><path d="M10.3 10.6 L12.6 10.2 M10.8 12.2 L13 11.8 M11.4 13.6 L13.4 13.2" stroke="#7e5c40" stroke-width=".6" fill="none"/></svg>
<div class="gh" style="left:251px;top:333px;width:525px;height:16px;clip-path:polygon(0 0,515px 0,525px 10px,525px 16px,0 16px)"></div>
<div class="a" style="left:775px;top:343px;width:1px;height:446px;background:#a8a8f0"></div>
<div class="a" style="left:774px;top:349px;width:1px;height:440px;background:#f4f6fb"></div>
<div class="t hd" style="left:253px;top:334.5px;transform:scaleX(0.8853);transform-origin:0 0;font-size:12px;">Materialkennwerte</div>
<div class="a" style="left:251px;top:348px;width:524px;height:1px;background:#fdfdff"></div>
<div class="a" style="left:251px;top:349px;width:523px;height:440px;background:#e8eeed;border-left:1px solid #8c8c8c;border-top:1px solid #a0a0a0"></div>
<div class="a" style="left:252px;top:350px;width:522px;height:16px;background:#dcdcdc;border-bottom:1px solid #a0a0a0"></div>
<div class="a" style="left:255px;top:353px;width:9px;height:9px;background:#fff;border:1px solid #000"></div>
<div class="a" style="left:257px;top:357px;width:5px;height:1px;background:#000"></div>
<div class="t g" style="left:267px;top:349px;transform:scaleX(0.8887);transform-origin:0 0;">Haupt-Kennwerte</div>
<div class="a" style="left:252px;top:366px;width:522px;height:16px;background:#f0f0f0;border-bottom:1px solid #a0a0a0"></div>
<div class="a" style="left:259px;top:366px;width:1px;height:15px;background:#d2d2d2"></div>
<div class="a" style="left:259px;top:373px;width:12px;height:1px;background:#d2d2d2"></div>
<div class="t g" style="left:279px;top:365px;transform:scaleX(0.8551);transform-origin:0 0;">Elastizitätsmodul</div>
<div class="a" style="left:631px;top:366px;width:77px;height:15px;background:#fff"></div>
<div class="t sym" style="left:562.5px;top:365px">E</div>
<div class="t g v" style="left:631px;top:366px;transform:scaleX(0.9050);transform-origin:100% 0;">3000.00</div>
<div class="t u" style="left:712.3px;top:365px"><span style="letter-spacing:-0.080px">kN/cm</span><span class="sup">2</span></div>
<div class="a" style="left:558px;top:365px;width:1px;height:17px;background:#a0a0a0"></div>
<div class="a" style="left:630px;top:365px;width:1px;height:17px;background:#a0a0a0"></div>
<div class="a" style="left:708px;top:365px;width:1px;height:17px;background:#a0a0a0"></div>
<div class="a" style="left:252px;top:382px;width:522px;height:16px;background:#f0f0f0;border-bottom:1px solid #a0a0a0"></div>
<div class="a" style="left:259px;top:382px;width:1px;height:15px;background:#d2d2d2"></div>
<div class="a" style="left:259px;top:389px;width:12px;height:1px;background:#d2d2d2"></div>
<div class="t g" style="left:279px;top:381px;transform:scaleX(0.8843);transform-origin:0 0;">Schubmodul</div>
<div class="a" style="left:631px;top:382px;width:77px;height:15px;background:#fff"></div>
<div class="t sym" style="left:562.5px;top:381px">G</div>
<div class="t g v" style="left:631px;top:382px;transform:scaleX(0.9050);transform-origin:100% 0;">1250.00</div>
<div class="t u" style="left:712.3px;top:381px"><span style="letter-spacing:-0.080px">kN/cm</span><span class="sup">2</span></div>
<div class="a" style="left:558px;top:381px;width:1px;height:17px;background:#a0a0a0"></div>
<div class="a" style="left:630px;top:381px;width:1px;height:17px;background:#a0a0a0"></div>
<div class="a" style="left:708px;top:381px;width:1px;height:17px;background:#a0a0a0"></div>
<div class="a" style="left:252px;top:398px;width:522px;height:16px;background:#f0f0f0;border-bottom:1px solid #a0a0a0"></div>
<div class="a" style="left:259px;top:398px;width:1px;height:15px;background:#d2d2d2"></div>
<div class="a" style="left:259px;top:405px;width:12px;height:1px;background:#d2d2d2"></div>
<div class="t g" style="left:279px;top:397px;transform:scaleX(0.8838);transform-origin:0 0;">Spezifisches Gewicht</div>
<div class="a" style="left:631px;top:398px;width:77px;height:15px;background:#fff"></div>
<div class="t sym" style="left:562.5px;top:397px"><span class="gr">γ</span></div>
<div class="t g v" style="left:631px;top:398px;transform:scaleX(0.9050);transform-origin:100% 0;">25.00</div>
<div class="t u" style="left:712.3px;top:397px"><span style="letter-spacing:0.000px">kN/m</span><span class="sup">3</span></div>
<div class="a" style="left:558px;top:397px;width:1px;height:17px;background:#a0a0a0"></div>
<div class="a" style="left:630px;top:397px;width:1px;height:17px;background:#a0a0a0"></div>
<div class="a" style="left:708px;top:397px;width:1px;height:17px;background:#a0a0a0"></div>
<div class="a" style="left:252px;top:414px;width:522px;height:16px;background:#f0f0f0;border-bottom:1px solid #a0a0a0"></div>
<div class="a" style="left:259px;top:414px;width:1px;height:15px;background:#d2d2d2"></div>
<div class="a" style="left:259px;top:421px;width:12px;height:1px;background:#d2d2d2"></div>
<div class="t g" style="left:279px;top:413px;transform:scaleX(0.8842);transform-origin:0 0;">Temperaturdehnzahl (Wärmedehnzahl)</div>
<div class="a" style="left:631px;top:414px;width:77px;height:15px;background:#fff"></div>
<div class="t sym" style="left:562.5px;top:413px"><span class="gr2">α</span></div>
<div class="t g v" style="left:631px;top:414px;transform:scaleX(0.9050);transform-origin:100% 0;">5.0000E-06</div>
<div class="t u" style="left:712.3px;top:413px"><span style="letter-spacing:-0.246px">1/°C</span></div>
<div class="a" style="left:558px;top:413px;width:1px;height:17px;background:#a0a0a0"></div>
<div class="a" style="left:630px;top:413px;width:1px;height:17px;background:#a0a0a0"></div>
<div class="a" style="left:708px;top:413px;width:1px;height:17px;background:#a0a0a0"></div>
<div class="a" style="left:252px;top:430px;width:522px;height:16px;background:#f0f0f0;border-bottom:1px solid #a0a0a0"></div>
<div class="a" style="left:259px;top:430px;width:1px;height:8px;background:#d2d2d2"></div>
<div class="a" style="left:259px;top:437px;width:12px;height:1px;background:#d2d2d2"></div>
<div class="t g" style="left:279px;top:429px;transform:scaleX(0.8838);transform-origin:0 0;">Teilsicherheitsbeiwert</div>
<div class="a" style="left:631px;top:430px;width:77px;height:15px;background:#fff"></div>
<div class="t sym" style="left:562.5px;top:429px"><span class="gr">γ</span><span class="sub">M</span></div>
<div class="t g v" style="left:631px;top:430px;transform:scaleX(0.9050);transform-origin:100% 0;">1.25</div>
<div class="a" style="left:558px;top:429px;width:1px;height:17px;background:#a0a0a0"></div>
<div class="a" style="left:630px;top:429px;width:1px;height:17px;background:#a0a0a0"></div>
<div class="a" style="left:708px;top:429px;width:1px;height:17px;background:#a0a0a0"></div>
<div class="a" style="left:252px;top:446px;width:522px;height:16px;background:#f0f0f0;border-bottom:1px solid #a0a0a0"></div>
<div class="a" style="left:255px;top:449px;width:9px;height:9px;background:#fff;border:1px solid #000"></div>
<div class="a" style="left:257px;top:453px;width:5px;height:1px;background:#000"></div>
<div class="t g" style="left:267px;top:445px;transform:scaleX(0.8896);transform-origin:0 0;">Zusätzliche Kennwerte</div>
<div class="a" style="left:252px;top:462px;width:522px;height:16px;background:#f0f0f0;border-bottom:1px solid #a0a0a0"></div>
<div class="a" style="left:259px;top:462px;width:1px;height:15px;background:#d2d2d2"></div>
<div class="a" style="left:259px;top:469px;width:12px;height:1px;background:#d2d2d2"></div>
<div class="t g" style="left:279px;top:461px;transform:scaleX(0.8762);transform-origin:0 0;">Charakteristische Festigkeit bei Biegung</div>
<div class="a" style="left:631px;top:462px;width:77px;height:15px;background:#fff"></div>
<div class="t sym" style="left:562.5px;top:461px">f<span class="sub">m,k</span></div>
<div class="t g v" style="left:631px;top:462px;transform:scaleX(0.9050);transform-origin:100% 0;">2.00</div>
<div class="t u" style="left:712.3px;top:461px"><span style="letter-spacing:-0.080px">kN/cm</span><span class="sup">2</span></div>
<div class="a" style="left:558px;top:461px;width:1px;height:17px;background:#a0a0a0"></div>
<div class="a" style="left:630px;top:461px;width:1px;height:17px;background:#a0a0a0"></div>
<div class="a" style="left:708px;top:461px;width:1px;height:17px;background:#a0a0a0"></div>
<div class="a" style="left:252px;top:478px;width:522px;height:16px;background:#f0f0f0;border-bottom:1px solid #a0a0a0"></div>
<div class="a" style="left:259px;top:478px;width:1px;height:15px;background:#d2d2d2"></div>
<div class="a" style="left:259px;top:485px;width:12px;height:1px;background:#d2d2d2"></div>
<div class="t g" style="left:279px;top:477px;transform:scaleX(0.8807);transform-origin:0 0;">Charakteristische Festigkeit bei Zug</div>
<div class="a" style="left:631px;top:478px;width:77px;height:15px;background:#fff"></div>
<div class="t sym" style="left:562.5px;top:477px">f<span class="sub">t,0,k</span></div>
<div class="t g v" style="left:631px;top:478px;transform:scaleX(0.9050);transform-origin:100% 0;">0.22</div>
<div class="t u" style="left:712.3px;top:477px"><span style="letter-spacing:-0.080px">kN/cm</span><span class="sup">2</span></div>
<div class="a" style="left:558px;top:477px;width:1px;height:17px;background:#a0a0a0"></div>
<div class="a" style="left:630px;top:477px;width:1px;height:17px;background:#a0a0a0"></div>
<div class="a" style="left:708px;top:477px;width:1px;height:17px;background:#a0a0a0"></div>
<div class="a" style="left:252px;top:494px;width:522px;height:16px;background:#f0f0f0;border-bottom:1px solid #a0a0a0"></div>
<div class="a" style="left:259px;top:494px;width:1px;height:15px;background:#d2d2d2"></div>
<div class="a" style="left:259px;top:501px;width:12px;height:1px;background:#d2d2d2"></div>
<div class="t g" style="left:279px;top:493px;transform:scaleX(0.8840);transform-origin:0 0;">Charakteristische Festigkeit bei Zug rechtwinklig</div>
<div class="a" style="left:631px;top:494px;width:77px;height:15px;background:#fff"></div>
<div class="t sym" style="left:562.5px;top:493px">f<span class="sub">t,90,k</span></div>
<div class="t g v" style="left:631px;top:494px;transform:scaleX(0.9050);transform-origin:100% 0;">0.22</div>
<div class="t u" style="left:712.3px;top:493px"><span style="letter-spacing:-0.080px">kN/cm</span><span class="sup">2</span></div>
<div class="a" style="left:558px;top:493px;width:1px;height:17px;background:#a0a0a0"></div>
<div class="a" style="left:630px;top:493px;width:1px;height:17px;background:#a0a0a0"></div>
<div class="a" style="left:708px;top:493px;width:1px;height:17px;background:#a0a0a0"></div>
<div class="a" style="left:252px;top:510px;width:522px;height:16px;background:#f0f0f0;border-bottom:1px solid #a0a0a0"></div>
<div class="a" style="left:259px;top:510px;width:1px;height:15px;background:#d2d2d2"></div>
<div class="a" style="left:259px;top:517px;width:12px;height:1px;background:#d2d2d2"></div>
<div class="t g" style="left:279px;top:509px;transform:scaleX(0.8818);transform-origin:0 0;">Charakteristische Festigkeit bei Druck</div>
<div class="a" style="left:631px;top:510px;width:77px;height:15px;background:#fff"></div>
<div class="t sym" style="left:562.5px;top:509px">f<span class="sub">c,0,k</span></div>
<div class="t g v" style="left:631px;top:510px;transform:scaleX(0.9050);transform-origin:100% 0;">2.00</div>
<div class="t u" style="left:712.3px;top:509px"><span style="letter-spacing:-0.080px">kN/cm</span><span class="sup">2</span></div>
<div class="a" style="left:558px;top:509px;width:1px;height:17px;background:#a0a0a0"></div>
<div class="a" style="left:630px;top:509px;width:1px;height:17px;background:#a0a0a0"></div>
<div class="a" style="left:708px;top:509px;width:1px;height:17px;background:#a0a0a0"></div>
<div class="a" style="left:252px;top:526px;width:522px;height:16px;background:#f0f0f0;border-bottom:1px solid #a0a0a0"></div>
<div class="a" style="left:259px;top:526px;width:1px;height:15px;background:#d2d2d2"></div>
<div class="a" style="left:259px;top:533px;width:12px;height:1px;background:#d2d2d2"></div>
<div class="t g" style="left:279px;top:525px;transform:scaleX(0.8862);transform-origin:0 0;">Charakteristische Festigkeit bei Druck rechtwinklig</div>
<div class="a" style="left:631px;top:526px;width:77px;height:15px;background:#fff"></div>
<div class="t sym" style="left:562.5px;top:525px">f<span class="sub">c,90,k</span></div>
<div class="t g v" style="left:631px;top:526px;transform:scaleX(0.9050);transform-origin:100% 0;">2.00</div>
<div class="t u" style="left:712.3px;top:525px"><span style="letter-spacing:-0.080px">kN/cm</span><span class="sup">2</span></div>
<div class="a" style="left:558px;top:525px;width:1px;height:17px;background:#a0a0a0"></div>
<div class="a" style="left:630px;top:525px;width:1px;height:17px;background:#a0a0a0"></div>
<div class="a" style="left:708px;top:525px;width:1px;height:17px;background:#a0a0a0"></div>
<div class="a" style="left:252px;top:542px;width:522px;height:16px;background:#f0f0f0;border-bottom:1px solid #a0a0a0"></div>
<div class="a" style="left:259px;top:542px;width:1px;height:15px;background:#d2d2d2"></div>
<div class="a" style="left:259px;top:549px;width:12px;height:1px;background:#d2d2d2"></div>
<div class="t g" style="left:279px;top:541px;transform:scaleX(0.8939);transform-origin:0 0;">Charakteristische Festigkeit bei Schub/Torsion</div>
<div class="a" style="left:631px;top:542px;width:77px;height:15px;background:#fff"></div>
<div class="t sym" style="left:562.5px;top:541px">f<span class="sub">v,k</span></div>
<div class="t g v" style="left:631px;top:542px;transform:scaleX(0.9050);transform-origin:100% 0;">0.35</div>
<div class="t u" style="left:712.3px;top:541px"><span style="letter-spacing:-0.080px">kN/cm</span><span class="sup">2</span></div>
<div class="a" style="left:558px;top:541px;width:1px;height:17px;background:#a0a0a0"></div>
<div class="a" style="left:630px;top:541px;width:1px;height:17px;background:#a0a0a0"></div>
<div class="a" style="left:708px;top:541px;width:1px;height:17px;background:#a0a0a0"></div>
<div class="a" style="left:252px;top:558px;width:522px;height:16px;background:#f0f0f0;border-bottom:1px solid #a0a0a0"></div>
<div class="a" style="left:259px;top:558px;width:1px;height:15px;background:#d2d2d2"></div>
<div class="a" style="left:259px;top:565px;width:12px;height:1px;background:#d2d2d2"></div>
<div class="t g" style="left:279px;top:557px;transform:scaleX(0.8557);transform-origin:0 0;">Elastizitätsmodul parallel</div>
<div class="a" style="left:631px;top:558px;width:77px;height:15px;background:#fff"></div>
<div class="t sym" style="left:562.5px;top:557px">E<span class="sub">0,mean</span></div>
<div class="t g v" style="left:631px;top:558px;transform:scaleX(0.9050);transform-origin:100% 0;">3000.00</div>
<div class="t u" style="left:712.3px;top:557px"><span style="letter-spacing:-0.080px">kN/cm</span><span class="sup">2</span></div>
<div class="a" style="left:558px;top:557px;width:1px;height:17px;background:#a0a0a0"></div>
<div class="a" style="left:630px;top:557px;width:1px;height:17px;background:#a0a0a0"></div>
<div class="a" style="left:708px;top:557px;width:1px;height:17px;background:#a0a0a0"></div>
<div class="a" style="left:252px;top:574px;width:522px;height:16px;background:#f0f0f0;border-bottom:1px solid #a0a0a0"></div>
<div class="a" style="left:259px;top:574px;width:1px;height:15px;background:#d2d2d2"></div>
<div class="a" style="left:259px;top:581px;width:12px;height:1px;background:#d2d2d2"></div>
<div class="t g" style="left:279px;top:573px;transform:scaleX(0.8734);transform-origin:0 0;">Elastizitätsmodul rechtwinklig</div>
<div class="a" style="left:631px;top:574px;width:77px;height:15px;background:#fff"></div>
<div class="t sym" style="left:562.5px;top:573px">E<span class="sub">90,mean</span></div>
<div class="t g v" style="left:631px;top:574px;transform:scaleX(0.9050);transform-origin:100% 0;">3000.00</div>
<div class="t u" style="left:712.3px;top:573px"><span style="letter-spacing:-0.080px">kN/cm</span><span class="sup">2</span></div>
<div class="a" style="left:558px;top:573px;width:1px;height:17px;background:#a0a0a0"></div>
<div class="a" style="left:630px;top:573px;width:1px;height:17px;background:#a0a0a0"></div>
<div class="a" style="left:708px;top:573px;width:1px;height:17px;background:#a0a0a0"></div>
<div class="a" style="left:252px;top:590px;width:522px;height:16px;background:#f0f0f0;border-bottom:1px solid #a0a0a0"></div>
<div class="a" style="left:259px;top:590px;width:1px;height:15px;background:#d2d2d2"></div>
<div class="a" style="left:259px;top:597px;width:12px;height:1px;background:#d2d2d2"></div>
<div class="t g" style="left:279px;top:589px;transform:scaleX(0.8843);transform-origin:0 0;">Schubmodul</div>
<div class="a" style="left:631px;top:590px;width:77px;height:15px;background:#fff"></div>
<div class="t sym" style="left:562.5px;top:589px">G<span class="sub">mean</span></div>
<div class="t g v" style="left:631px;top:590px;transform:scaleX(0.9050);transform-origin:100% 0;">1250.00</div>
<div class="t u" style="left:712.3px;top:589px"><span style="letter-spacing:-0.080px">kN/cm</span><span class="sup">2</span></div>
<div class="a" style="left:558px;top:589px;width:1px;height:17px;background:#a0a0a0"></div>
<div class="a" style="left:630px;top:589px;width:1px;height:17px;background:#a0a0a0"></div>
<div class="a" style="left:708px;top:589px;width:1px;height:17px;background:#a0a0a0"></div>
<div class="a" style="left:252px;top:606px;width:522px;height:16px;background:#f0f0f0;border-bottom:1px solid #a0a0a0"></div>
<div class="a" style="left:259px;top:606px;width:1px;height:15px;background:#d2d2d2"></div>
<div class="a" style="left:259px;top:613px;width:12px;height:1px;background:#d2d2d2"></div>
<div class="t g" style="left:279px;top:605px;transform:scaleX(0.8557);transform-origin:0 0;">Elastizitätsmodul parallel</div>
<div class="a" style="left:631px;top:606px;width:77px;height:15px;background:#fff"></div>
<div class="t sym" style="left:562.5px;top:605px">E<span class="sub">0,05</span></div>
<div class="t g v" style="left:631px;top:606px;transform:scaleX(0.9050);transform-origin:100% 0;">3000.00</div>
<div class="t u" style="left:712.3px;top:605px"><span style="letter-spacing:-0.080px">kN/cm</span><span class="sup">2</span></div>
<div class="a" style="left:558px;top:605px;width:1px;height:17px;background:#a0a0a0"></div>
<div class="a" style="left:630px;top:605px;width:1px;height:17px;background:#a0a0a0"></div>
<div class="a" style="left:708px;top:605px;width:1px;height:17px;background:#a0a0a0"></div>
<div class="a" style="left:252px;top:622px;width:522px;height:16px;background:#f0f0f0;border-bottom:1px solid #a0a0a0"></div>
<div class="a" style="left:259px;top:622px;width:1px;height:15px;background:#d2d2d2"></div>
<div class="a" style="left:259px;top:629px;width:12px;height:1px;background:#d2d2d2"></div>
<div class="t g" style="left:279px;top:621px;transform:scaleX(0.8734);transform-origin:0 0;">Elastizitätsmodul rechtwinklig</div>
<div class="a" style="left:631px;top:622px;width:77px;height:15px;background:#fff"></div>
<div class="t sym" style="left:562.5px;top:621px">E<span class="sub">90,05</span></div>
<div class="t g v" style="left:631px;top:622px;transform:scaleX(0.9050);transform-origin:100% 0;">3000.00</div>
<div class="t u" style="left:712.3px;top:621px"><span style="letter-spacing:-0.080px">kN/cm</span><span class="sup">2</span></div>
<div class="a" style="left:558px;top:621px;width:1px;height:17px;background:#a0a0a0"></div>
<div class="a" style="left:630px;top:621px;width:1px;height:17px;background:#a0a0a0"></div>
<div class="a" style="left:708px;top:621px;width:1px;height:17px;background:#a0a0a0"></div>
<div class="a" style="left:252px;top:638px;width:522px;height:16px;background:#f0f0f0;border-bottom:1px solid #a0a0a0"></div>
<div class="a" style="left:259px;top:638px;width:1px;height:15px;background:#d2d2d2"></div>
<div class="a" style="left:259px;top:645px;width:12px;height:1px;background:#d2d2d2"></div>
<div class="t g" style="left:279px;top:637px;transform:scaleX(0.8843);transform-origin:0 0;">Schubmodul</div>
<div class="a" style="left:631px;top:638px;width:77px;height:15px;background:#fff"></div>
<div class="t sym" style="left:562.5px;top:637px">G<span class="sub">05</span></div>
<div class="t g v" style="left:631px;top:638px;transform:scaleX(0.9050);transform-origin:100% 0;">1250.00</div>
<div class="t u" style="left:712.3px;top:637px"><span style="letter-spacing:-0.080px">kN/cm</span><span class="sup">2</span></div>
<div class="a" style="left:558px;top:637px;width:1px;height:17px;background:#a0a0a0"></div>
<div class="a" style="left:630px;top:637px;width:1px;height:17px;background:#a0a0a0"></div>
<div class="a" style="left:708px;top:637px;width:1px;height:17px;background:#a0a0a0"></div>
<div class="a" style="left:252px;top:654px;width:522px;height:16px;background:#f0f0f0;border-bottom:1px solid #a0a0a0"></div>
<div class="a" style="left:259px;top:654px;width:1px;height:15px;background:#d2d2d2"></div>
<div class="a" style="left:259px;top:661px;width:12px;height:1px;background:#d2d2d2"></div>
<div class="t g" style="left:279px;top:653px;transform:scaleX(0.8894);transform-origin:0 0;">Rollschubfestigkeit</div>
<div class="a" style="left:631px;top:654px;width:77px;height:15px;background:#fff"></div>
<div class="t sym" style="left:562.5px;top:653px">f<span class="sub">R,k</span></div>
<div class="t g v" style="left:631px;top:654px;transform:scaleX(0.9050);transform-origin:100% 0;">0.22</div>
<div class="t u" style="left:712.3px;top:653px"><span style="letter-spacing:-0.080px">kN/cm</span><span class="sup">2</span></div>
<div class="a" style="left:558px;top:653px;width:1px;height:17px;background:#a0a0a0"></div>
<div class="a" style="left:630px;top:653px;width:1px;height:17px;background:#a0a0a0"></div>
<div class="a" style="left:708px;top:653px;width:1px;height:17px;background:#a0a0a0"></div>
<div class="a" style="left:252px;top:670px;width:522px;height:16px;background:#f0f0f0;border-bottom:1px solid #a0a0a0"></div>
<div class="a" style="left:259px;top:670px;width:1px;height:15px;background:#d2d2d2"></div>
<div class="a" style="left:259px;top:677px;width:12px;height:1px;background:#d2d2d2"></div>
<div class="t g" style="left:279px;top:669px;transform:scaleX(0.9011);transform-origin:0 0;">Rohdichte</div>
<div class="a" style="left:631px;top:670px;width:77px;height:15px;background:#fff"></div>
<div class="t sym" style="left:562.5px;top:669px">ρ<span class="sub">k</span></div>
<div class="t g v" style="left:631px;top:670px;transform:scaleX(0.9050);transform-origin:100% 0;">365.00</div>
<div class="t u" style="left:712.3px;top:669px"><span style="letter-spacing:-0.054px">kg/m</span><span class="sup">3</span></div>
<div class="a" style="left:558px;top:669px;width:1px;height:17px;background:#a0a0a0"></div>
<div class="a" style="left:630px;top:669px;width:1px;height:17px;background:#a0a0a0"></div>
<div class="a" style="left:708px;top:669px;width:1px;height:17px;background:#a0a0a0"></div>
<div class="a" style="left:252px;top:686px;width:522px;height:16px;background:#f0f0f0;border-bottom:1px solid #a0a0a0"></div>
<div class="a" style="left:259px;top:686px;width:1px;height:15px;background:#d2d2d2"></div>
<div class="a" style="left:259px;top:693px;width:12px;height:1px;background:#d2d2d2"></div>
<div class="t g" style="left:279px;top:685px;transform:scaleX(0.8888);transform-origin:0 0;">Mittelwert der Rohdichte</div>
<div class="a" style="left:631px;top:686px;width:77px;height:15px;background:#fff"></div>
<div class="t sym" style="left:562.5px;top:685px">ρ<span class="sub">mean</span></div>
<div class="t g v" style="left:631px;top:686px;transform:scaleX(0.9050);transform-origin:100% 0;">400.00</div>
<div class="t u" style="left:712.3px;top:685px"><span style="letter-spacing:-0.054px">kg/m</span><span class="sup">3</span></div>
<div class="a" style="left:558px;top:685px;width:1px;height:17px;background:#a0a0a0"></div>
<div class="a" style="left:630px;top:685px;width:1px;height:17px;background:#a0a0a0"></div>
<div class="a" style="left:708px;top:685px;width:1px;height:17px;background:#a0a0a0"></div>
<div class="a" style="left:252px;top:702px;width:522px;height:16px;background:#f0f0f0;border-bottom:1px solid #a0a0a0"></div>
<div class="a" style="left:259px;top:702px;width:1px;height:8px;background:#d2d2d2"></div>
<div class="a" style="left:259px;top:709px;width:12px;height:1px;background:#d2d2d2"></div>
<div class="t g" style="left:279px;top:701px;transform:scaleX(0.8765);transform-origin:0 0;">Kategorie der Beiwerte</div>
<div class="a" style="left:631px;top:702px;width:143px;height:15px;background:#fff"></div>
<div class="t g" style="left:635.5px;top:702px;transform:scaleX(0.8795);transform-origin:0 0;">Brettschichtholz</div>
<div class="a" style="left:558px;top:701px;width:1px;height:17px;background:#a0a0a0"></div>
<div class="a" style="left:630px;top:701px;width:1px;height:17px;background:#a0a0a0"></div>
<div class="a" style="left:631px;top:670px;width:77px;height:15px;border:1px solid #000"></div>
<div class="a" style="left:558px;top:718px;width:1px;height:71px;background:#a0a0a0"></div>
<div class="a" style="left:630px;top:718px;width:1px;height:71px;background:#a0a0a0"></div>
<div class="a" style="left:708px;top:718px;width:1px;height:71px;background:#a0a0a0"></div>
<div class="a" style="left:773px;top:349px;width:1px;height:440px;background:#a0a0a0"></div>
</body></html>
